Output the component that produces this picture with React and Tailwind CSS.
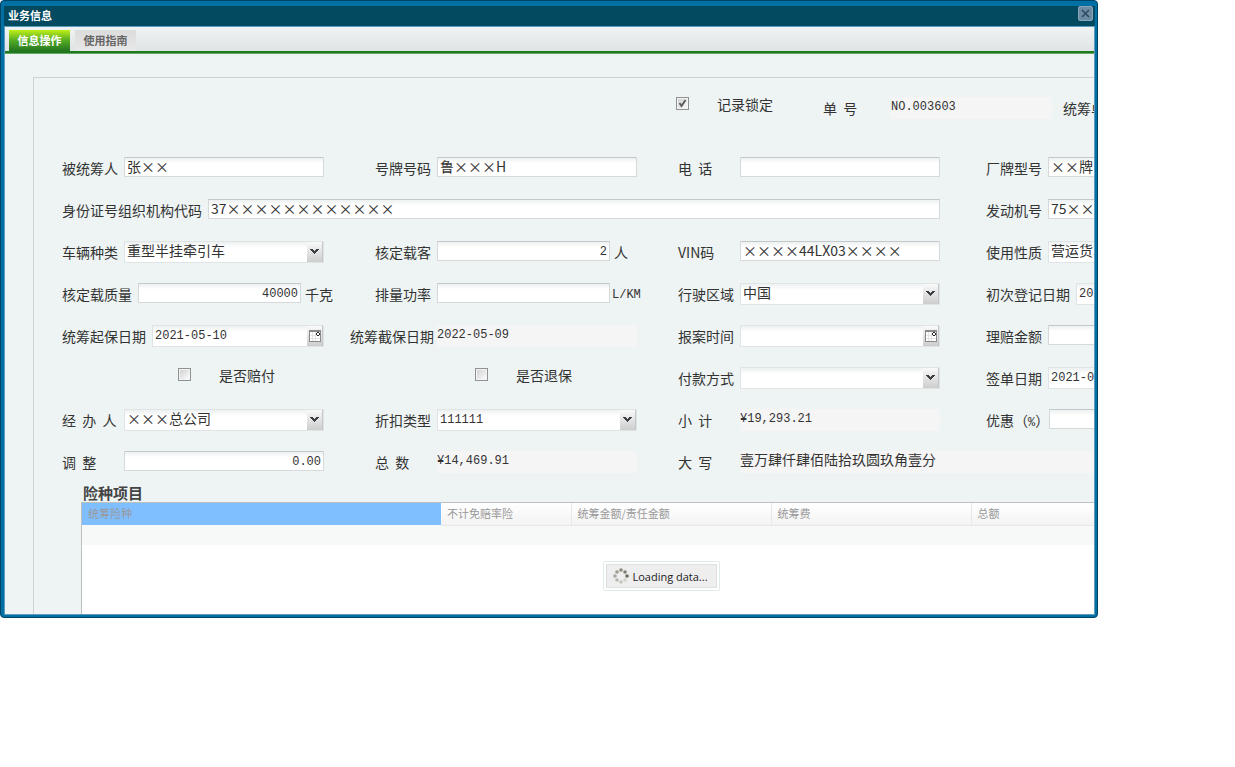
import React, { useId, useState } from 'react'

const cjk = "font-['Noto_Sans_CJK_SC',sans-serif]"
const mono = "font-['Liberation_Mono',monospace]"

// plain ascii values are set in the narrow mono face, the rest in the CJK one
const valueFont = (value) =>
  /^[\x20-\x7e¥]*$/.test(value) ? `${mono} text-[12px] pt-px` : `${cjk} text-[14px] pb-0.5`

const boxBg = 'bg-linear-to-b from-[#eef1f1] to-white to-30%'

const Cell = ({ label, id, className = '', labelClass = 'mr-1.5', children }) => (
  <div className={`flex items-start min-w-0 ${className}`}>
    <label htmlFor={id} className={`shrink-0 min-w-14 leading-[22px] whitespace-pre ${labelClass}`}>
      {label}
    </label>
    {children}
  </div>
)

const TextField = ({ label, value = '', width = 'w-[200px]', right, unit, ...rest }) => {
  const id = useId()
  return (
    <Cell label={label} id={id} {...rest}>
      <input
        id={id}
        type="text"
        defaultValue={value}
        className={`${width} shrink-0 h-5 px-0.5 border border-[#d5d9da] border-t-[#c3c9cb] leading-4 outline-none ${boxBg} ${valueFont(value)} ${right ? 'text-right' : ''}`}
      />
      {unit && (
        <span className={`shrink-0 ${unit === 'L/KM' ? `ml-0.5 leading-6 ${mono} text-[12px]` : 'ml-1 leading-[22px]'}`}>
          {unit}
        </span>
      )}
    </Cell>
  )
}

const SelectField = ({ label, value = '', ...rest }) => {
  const id = useId()
  return (
    <Cell label={label} id={id} {...rest}>
      <div className={`flex w-[200px] shrink-0 h-[22px] border border-[#dfe5e5] ${boxBg}`}>
        <select
          id={id}
          defaultValue={value}
          className={`appearance-none flex-1 min-w-0 h-[18px] px-0.5 leading-4 outline-none ${valueFont(value)}`}
        >
          <option value={value}>{value}</option>
        </select>
        <span className="w-4 flex items-center justify-center border-r border-[#c4c7c8] bg-linear-to-b from-[#fafafa] to-[#cdcdcd] pointer-events-none">
          <svg width="9" height="6" viewBox="0 0 9 6" shapeRendering="crispEdges">
            <path d="M0 0h3v1h1v1h1v-1h1v-1h3v1h-1v1h-1v1h-1v1h-1v1h-1v-1h-1v-1h-1v-1h-1v-1h-1z" fill="#3d4042" />
          </svg>
        </span>
      </div>
    </Cell>
  )
}

const DateField = ({ label, value = '', width = 'w-[200px]', ...rest }) => {
  const id = useId()
  return (
    <Cell label={label} id={id} {...rest}>
      <div className={`flex ${width} shrink-0 h-[22px] border border-[#dfe5e5] ${boxBg}`}>
        <input
          id={id}
          type="text"
          defaultValue={value}
          className={`flex-1 min-w-0 h-[18px] px-0.5 outline-none ${valueFont(value)}`}
        />
        <button
          type="button"
          aria-label="选择日期"
          className="w-4 flex items-center justify-center border-r border-[#c4c7c8] bg-linear-to-b from-[#fafafa] to-[#cdcdcd]"
        >
          <svg width="12" height="12" viewBox="0 0 12 12" shapeRendering="crispEdges">
            <rect width="12" height="12" fill="#8a8a8a" />
            <rect x="1" y="2" width="10" height="9" fill="#fff" />
            <path d="M3.5 2v9M6.5 2v9M1 5.5h10M1 8.5h10" stroke="#e2e2e2" />
            <path d="M8 2h2v1h1v2h-1v1h-2v-1h-1v-2h1z" fill="#222" />
            <rect x="8" y="3" width="2" height="2" fill="#fff" />
          </svg>
        </button>
      </div>
    </Cell>
  )
}

const ReadField = ({ label, value, width = 'w-[200px]', ...rest }) => {
  const id = useId()
  return (
    <Cell label={label} id={id} {...rest}>
      <span className={`${width} shrink-0 h-[22px] flex rounded-xs bg-[#f5f5f5]`}>
        <input
          id={id}
          type="text"
          readOnly
          value={value}
          className={`w-full h-[18px] outline-none ${valueFont(value)}`}
        />
      </span>
    </Cell>
  )
}

const CheckField = ({ label, checked = false, className = '' }) => {
  const [on, setOn] = useState(checked)
  return (
    <label className={`flex items-start leading-[14px] ${className}`}>
      <span className="grid mr-7 shrink-0">
        <input
          type="checkbox"
          checked={on}
          onChange={(e) => setOn(e.target.checked)}
          className="appearance-none col-start-1 row-start-1 size-[13px] border border-[#8f9293] bg-linear-to-br from-[#cfcfcf] to-white shadow-[inset_0_0_0_1px_#f4f4f4]"
        />
        {on && (
          <svg className="col-start-1 row-start-1 pointer-events-none" width="13" height="13" viewBox="0 0 13 13">
            <path d="M3.5 6 5.5 9 9.5 3" fill="none" stroke="#5c5f60" strokeWidth="2" />
          </svg>
        )}
      </span>
      {label}
    </label>
  )
}

const dots = [
  [8, 2, '#8d8b80'],
  [12, 4, '#7f7d72'],
  [14, 8, '#6f6d62'],
  [12, 12, '#d4d2c9'],
  [8, 14, '#c6c4ba'],
  [4, 12, '#b8b6ac'],
  [2, 8, '#aaa89d'],
  [4, 4, '#9c9a8f'],
]

const columns = ['不计免赔率险', '统筹金额/责任金额', '统筹费', '总额']

const App = () => {
  const [tab, setTab] = useState('info')

  return (
    <div className={`${cjk} min-h-screen bg-white text-[14px] text-[#333]`}>
      <div className="mr-[137px] rounded border border-[#004567] bg-[#006fa3] pl-[3px] pr-0.5 pt-[5px] pb-[2px]">
        <header className="flex items-start justify-between h-5 pl-1 bg-[#03495f]">
          <h1 className="text-[11px] font-bold text-white leading-[18px]">业务信息</h1>
          <button
            type="button"
            aria-label="关闭"
            className="size-[15px] mr-0.5 flex items-center justify-center rounded-xs border border-[#8ba5b8] bg-[#6d8ca3]"
          >
            <svg width="9" height="9" viewBox="0 0 9 9">
              <path d="M1 1l7 7M8 1l-7 7" stroke="#2b4a60" strokeWidth="1.5" />
            </svg>
          </button>
        </header>

        <main className="border border-[#5d9cbd] bg-[#eef3f4] overflow-hidden">
          <nav className="flex items-end gap-[5px] h-6 pl-1 bg-linear-to-b from-[#f0f3f3] to-[#dfe4e4] text-[11px] font-bold">
            <button
              type="button"
              onClick={() => setTab('info')}
              className="h-[21px] w-[61px] pb-0.5 leading-[18px] text-white bg-linear-to-b from-[#bdf013] via-[#54ab22] to-[#23751f]"
            >
              信息操作
            </button>
            <button
              type="button"
              onClick={() => setTab('guide')}
              className="h-[21px] w-[61px] pb-0.5 leading-[18px] text-[#666] bg-linear-to-b from-[#dcdcdc] to-[#e8e8e8]"
            >
              使用指南
            </button>
          </nav>
          <div className="h-[3px] bg-[#1f7a1f] border-b border-[#64a764]" />

          <form className="pl-7 pt-[23px]" onSubmit={(e) => e.preventDefault()}>
            <div className="w-[1260px] border-l border-t border-[#cdd2d3] pt-[19px]">
              <div className="flex items-start h-[60px] pl-[642px]">
                <CheckField label="记录锁定" checked />
                <ReadField
                  label="单  号"
                  value="NO.003603"
                  width="w-[161px]"
                  className="ml-[50px]"
                  labelClass="mr-3"
                />
                <Cell label="统筹单号" className="ml-[11px]" />
              </div>

              <div className="grid grid-cols-[288px_328px_308px_1fr] auto-rows-[22px] gap-y-5 pl-7">
                <TextField label="被统筹人" value="张××" />
                <TextField label="号牌号码" value="鲁×××H" className="pl-[25px]" />
                <TextField label="电  话" />
                <TextField label="厂牌型号" value="××牌" />

                <TextField
                  label="身份证号组织机构代码"
                  value="37××××××××××××"
                  width="w-[732px]"
                  className="col-span-3"
                />
                <TextField label="发动机号" value="75××××" />

                <SelectField label="车辆种类" value="重型半挂牵引车" />
                <TextField label="核定载客" value="2" width="w-[173px]" right unit="人" className="pl-[25px]" />
                <TextField label="VIN码" value="××××44LX03××××" />
                <SelectField label="使用性质" value="营运货车" />

                <TextField label="核定载质量" value="40000" width="w-[163px]" right unit="千克" />
                <TextField label="排量功率" width="w-[173px]" unit="L/KM" className="pl-[25px]" />
                <SelectField label="行驶区域" value="中国" />
                <DateField label="初次登记日期" value="2021-05-10" />

                <DateField label="统筹起保日期" value="2021-05-10" width="w-[172px]" />
                <ReadField label="统筹截保日期" value="2022-05-09" labelClass="mr-[3px]" />
                <DateField label="报案时间" />
                <TextField label="理赔金额" />

                <CheckField label="是否赔付" className="pt-px pl-[116px]" />
                <CheckField label="是否退保" className="pt-px pl-[125px]" />
                <SelectField label="付款方式" />
                <DateField label="签单日期" value="2021-05-10" />

                <SelectField label="经  办  人" value="×××总公司" />
                <SelectField label="折扣类型" value="111111" className="pl-[25px]" />
                <ReadField label="小  计" value="¥19,293.21" />
                <TextField
                  label={<>优惠（<span className={`${mono} text-[12px]`}>%</span>）</>}
                  labelClass="mr-0"
                />

                <TextField label="调  整" value="0.00" right />
                <ReadField label="总  数" value="¥14,469.91" className="pl-[25px]" />
                <ReadField
                  label="大  写"
                  value="壹万肆仟肆佰陆拾玖圆玖角壹分"
                  width="w-[500px]"
                  className="col-span-2"
                />
              </div>

              <section className="ml-[47px] mt-2.5">
                <h2 className="h-[19px] pl-0.5 text-[15px] leading-5 font-bold text-[#444]">险种项目</h2>
                <div className="w-[1160px] border-l border-t border-[#bcc0c1] bg-white">
                  <table className="w-full table-fixed text-[11px] text-[#999] text-left">
                    <colgroup>
                      <col className="w-[359px]" />
                      <col className="w-[130px]" />
                      <col className="w-[200px]" />
                      <col className="w-[200px]" />
                      <col />
                    </colgroup>
                    <thead>
                      <tr className="h-[22px]">
                        <th className="pl-1.5 pb-0.5 font-normal leading-[18px] bg-[#80bfff]">统筹险种</th>
                        {columns.map((name) => (
                          <th
                            key={name}
                            className="pl-1.5 pb-0.5 font-normal leading-[18px] border-r border-b border-[#e6e8e8] bg-linear-to-b from-white to-[#f3f3f3]"
                          >
                            {name}
                          </th>
                        ))}
                      </tr>
                    </thead>
                    <tbody>
                      <tr className="h-5 bg-[#f7f9f9]">
                        <td colSpan={5} />
                      </tr>
                    </tbody>
                  </table>
                  <div className="flex justify-center pt-4 h-[69px]">
                    <div className="h-[30px] p-0.5 rounded-xs border border-[#e0ebe8] bg-white" role="status">
                      <div className="flex items-center gap-[3px] h-full pl-1.5 pr-2 border border-[#dfdfdf] bg-[#eee] font-['Open_Sans',sans-serif] text-[11px] text-[#222]">
                        <svg width="16" height="16" viewBox="0 0 16 16">
                          {dots.map(([x, y, fill]) => (
                            <circle key={fill} cx={x} cy={y} r="1.8" fill={fill} />
                          ))}
                        </svg>
                        <span className="pt-0.5">Loading data...</span>
                      </div>
                    </div>
                  </div>
                </div>
              </section>
            </div>
          </form>
        </main>
      </div>
    </div>
  )
}

export default App
